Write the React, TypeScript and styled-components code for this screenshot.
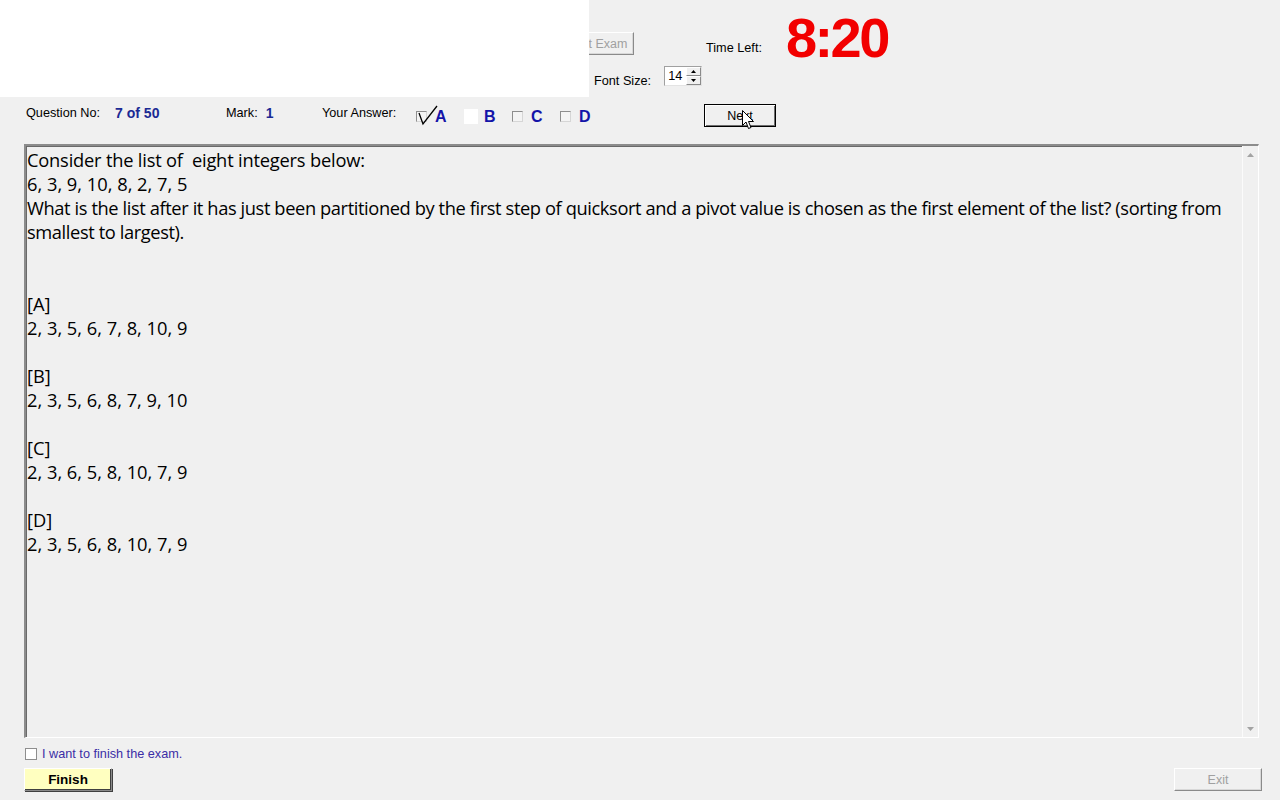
import React from "react";
import styled, { createGlobalStyle } from "styled-components";

const GlobalStyle = createGlobalStyle`
  html, body { margin: 0; padding: 0; background: #f0f0f0; }
  body { font-family: "Liberation Sans", Arial, sans-serif; }
`;

const Page = styled.div`
  position: relative;
  width: 1280px;
  height: 800px;
  background: #f0f0f0;
  display: flex;
  flex-direction: column;
  overflow: hidden;
  font-family: "Liberation Sans", Arial, sans-serif;
`;

const Overlay = styled.div`
  position: absolute;
  left: 0;
  top: 0;
  width: 589px;
  height: 97px;
  background: #ffffff;
  z-index: 5;
`;

const Header = styled.div`
  height: 97px;
  display: flex;
  padding-left: 559px;
  flex-shrink: 0;
`;

const LeftCol = styled.div`
  width: 147px;
  display: flex;
  flex-direction: column;
`;

const WinButton = styled.button<{ $w: number; $disabled?: boolean; $yellow?: boolean; $bold?: boolean; $default?: boolean }>`
  width: ${(p) => p.$w}px;
  height: 23px;
  box-sizing: border-box;
  padding: 0;
  margin: 0;
  font-family: "Liberation Sans", Arial, sans-serif;
  font-size: ${(p) => (p.$bold ? "13.5px" : "12.5px")};
  font-weight: ${(p) => (p.$bold ? 700 : 400)};
  color: ${(p) => (p.$disabled ? "#a0a0a0" : "#000")};
  background: ${(p) => (p.$yellow ? "#ffffc0" : "#f0f0f0")};
  border: 1px solid;
  border-color: ${(p) =>
    p.$default ? "#000" : "#ffffff #8a8a8a #8a8a8a #ffffff"};
  box-shadow: ${(p) =>
    p.$default
      ? "inset 1px 1px 0 #ffffff, inset -1px -1px 0 #6e6e6e"
      : p.$disabled
      ? "inset -1px -1px 0 #d8d8d8"
      : "inset -1px -1px 0 #404040, 1px 1px 0 #404040"};
  cursor: default;
  position: relative;
`;

const StartButton = styled(WinButton)`
  margin-top: 32px;
`;

const FontSizeRow = styled.div`
  margin-top: 11px;
  padding-left: 35px;
  display: flex;
  align-items: flex-start;
  gap: 13px;
  height: 20px;
`;

const Label = styled.span`
  font-size: 12.7px;
  line-height: 14px;
  color: #000;
  white-space: nowrap;
`;

const FontSizeLabel = styled(Label)`
  margin-top: 8px;
`;

const Spinner = styled.div`
  width: 38px;
  height: 20px;
  box-sizing: border-box;
  background: #ffffff;
  border: 1px solid;
  border-color: #a0a0a0 #e3e3e3 #e3e3e3 #a0a0a0;
  display: flex;
  align-items: stretch;
`;

const SpinValue = styled.span`
  flex: 1;
  font-size: 12.7px;
  line-height: 18px;
  padding-left: 3px;
  color: #000;
`;

const SpinButtons = styled.div`
  width: 15px;
  display: flex;
  flex-direction: column;
`;

const SpinBtn = styled.div`
  flex: 1;
  background: #f0f0f0;
  border: 1px solid;
  border-color: #ffffff #8a8a8a #8a8a8a #ffffff;
  display: flex;
  align-items: center;
  justify-content: center;
`;

const TimeCol = styled.div`
  display: flex;
  align-items: flex-start;
`;

const TimeLabel = styled(Label)`
  margin-top: 41px;
  width: 80px;
`;

const Timer = styled.div`
  margin-top: 10px;
  font-size: 56px;
  line-height: 56px;
  font-weight: 700;
  color: #f20000;
  letter-spacing: -2.6px;
`;

const InfoRow = styled.div`
  height: 47px;
  flex-shrink: 0;
  display: flex;
  align-items: flex-start;
  padding-left: 26px;
`;

const Field = styled.div<{ $w: number; $gap: number }>`
  width: ${(p) => p.$w}px;
  margin-top: 9px;
  display: flex;
  align-items: center;
  gap: ${(p) => p.$gap}px;
`;

const Value = styled.span`
  font-size: 14px;
  line-height: 14px;
  font-weight: 700;
  color: #1b2a94;
`;

const Answers = styled.div`
  display: flex;
  margin-top: 12px;
  margin-left: 18px;
`;

const Option = styled.div`
  width: 48px;
  display: flex;
  align-items: center;
  gap: 8px;
  position: relative;
`;

const Box = styled.span<{ $hidden?: boolean }>`
  width: ${(p) => (p.$hidden ? 14 : 11)}px;
  height: ${(p) => (p.$hidden ? 15 : 11)}px;
  box-sizing: border-box;
  background: ${(p) => (p.$hidden ? "#ffffff" : "#f4f4f4")};
  border: ${(p) => (p.$hidden ? "none" : "1px solid")};
  border-color: #8e8e8e #d6d6d6 #d6d6d6 #8e8e8e;
  margin-right: ${(p) => (p.$hidden ? "-2px" : "0")};
  margin-top: -2px;
  flex-shrink: 0;
`;

const Letter = styled.span`
  font-size: 16px;
  line-height: 16px;
  font-weight: 700;
  color: #1414a8;
`;

const CheckMark = styled.svg`
  position: absolute;
  left: 0;
  top: -5px;
`;

const NextWrap = styled.div`
  margin-left: 96px;
  margin-top: 7px;
  position: relative;
`;

const Cursor = styled.svg`
  position: absolute;
  left: 38px;
  top: 6px;
  z-index: 3;
`;

const ContentPanel = styled.div`
  margin-left: 24px;
  width: 1235px;
  height: 594px;
  box-sizing: border-box;
  flex-shrink: 0;
  display: flex;
  border-top: 2px solid #8c8c8c;
  border-left: 2px solid #8c8c8c;
  border-bottom: 1px solid #ffffff;
  border-right: 1px solid #ffffff;
  box-shadow: inset 1px 1px 0 #6a6a6a;
`;

const TextArea = styled.div`
  flex: 1;
  padding: 2px 0 0 1px;
  font-family: "Open Sans", "Noto Sans", sans-serif;
  font-size: 18.3px;
  line-height: 24px;
  color: #000;
  white-space: pre-wrap;
`;

const Line = styled.div<{ $tight?: number }>`
  min-height: 24px;
  letter-spacing: ${(p) => p.$tight ?? 0}px;
`;

const Scrollbar = styled.div`
  width: 15px;
  border-left: 1px solid #fbfbfb;
  background: #f0f0f0;
  display: flex;
  flex-direction: column;
  justify-content: space-between;
  align-items: center;
  padding: 7px 0 6px;
`;

const Footer = styled.div`
  display: flex;
  flex-direction: column;
  padding-left: 24px;
  padding-right: 18px;
`;

const FinishCheck = styled.label`
  margin-top: 10px;
  display: flex;
  align-items: center;
  gap: 5px;
  padding-left: 1px;
  height: 12px;
`;

const CheckBox12 = styled.span`
  width: 12px;
  height: 12px;
  box-sizing: border-box;
  background: #ffffff;
  border: 1px solid #8e8e8e;
`;

const FinishLabel = styled(Label)`
  color: #3b2ea6;
`;

const ButtonRow = styled.div`
  margin-top: 8px;
  display: flex;
  justify-content: space-between;
`;

const lines: { text: string; tight?: number }[] = [
  { text: "Consider the list of  eight integers below:", tight: -0.2 },
  { text: "6, 3, 9, 10, 8, 2, 7, 5" },
  {
    text:
      "What is the list after it has just been partitioned by the first step of quicksort and a pivot value is chosen as the first element of the list? (sorting from smallest to largest).",
    tight: -0.4,
  },
  { text: "" },
  { text: "" },
  { text: "[A]" },
  { text: "2, 3, 5, 6, 7, 8, 10, 9" },
  { text: "" },
  { text: "[B]" },
  { text: "2, 3, 5, 6, 8, 7, 9, 10" },
  { text: "" },
  { text: "[C]" },
  { text: "2, 3, 6, 5, 8, 10, 7, 9" },
  { text: "" },
  { text: "[D]" },
  { text: "2, 3, 5, 6, 8, 10, 7, 9" },
];

const Tri = ({ up }: { up?: boolean }) => (
  <svg width="7" height="4" viewBox="0 0 7 4">
    <polygon points={up ? "0,4 7,4 3.5,0" : "0,0 7,0 3.5,4"} fill="#a3a3a3" />
  </svg>
);

const SpinTri = ({ up }: { up?: boolean }) => (
  <svg width="5" height="3" viewBox="0 0 5 3">
    <polygon points={up ? "0,3 5,3 2.5,0" : "0,0 5,0 2.5,3"} fill="#000" />
  </svg>
);

export default function App() {
  return (
    <>
      <GlobalStyle />
      <Page>
        <Overlay />
        <Header>
          <LeftCol>
            <StartButton $w={75} $disabled>
              Start Exam
            </StartButton>
            <FontSizeRow>
              <FontSizeLabel>Font Size:</FontSizeLabel>
              <Spinner>
                <SpinValue>14</SpinValue>
                <SpinButtons>
                  <SpinBtn>
                    <SpinTri up />
                  </SpinBtn>
                  <SpinBtn>
                    <SpinTri />
                  </SpinBtn>
                </SpinButtons>
              </Spinner>
            </FontSizeRow>
          </LeftCol>
          <TimeCol>
            <TimeLabel>Time Left:</TimeLabel>
            <Timer>8:20</Timer>
          </TimeCol>
        </Header>
        <InfoRow>
          <Field $w={200} $gap={15}>
            <Label>Question No:</Label>
            <Value>7 of 50</Value>
          </Field>
          <Field $w={96} $gap={8}>
            <Label>Mark:</Label>
            <Value>1</Value>
          </Field>
          <Field $w={76} $gap={0}>
            <Label>Your Answer:</Label>
          </Field>
          <Answers>
            <Option>
              <Box />
              <Letter>A</Letter>
              <CheckMark width="26" height="24" viewBox="0 0 26 24">
                <polyline
                  points="3,9 7,20 21,2"
                  fill="none"
                  stroke="#000"
                  strokeWidth="1.3"
                />
              </CheckMark>
            </Option>
            <Option>
              <Box $hidden />
              <Letter>B</Letter>
            </Option>
            <Option>
              <Box />
              <Letter>C</Letter>
            </Option>
            <Option>
              <Box />
              <Letter>D</Letter>
            </Option>
          </Answers>
          <NextWrap>
            <WinButton $w={72} $default>
              Next
            </WinButton>
            <Cursor width="13" height="20" viewBox="0 0 13 20">
              <polygon
                points="0.5,0.5 0.5,15.5 4,12 6.5,18.5 9,17.5 6.5,11.5 11.5,11.5"
                fill="#ffffff"
                stroke="#000"
                strokeWidth="1"
              />
            </Cursor>
          </NextWrap>
        </InfoRow>
        <ContentPanel>
          <TextArea>
            {lines.map((l, i) => (
              <Line key={i} $tight={l.tight}>
                {l.text}
              </Line>
            ))}
          </TextArea>
          <Scrollbar>
            <Tri up />
            <Tri />
          </Scrollbar>
        </ContentPanel>
        <Footer>
          <FinishCheck>
            <CheckBox12 />
            <FinishLabel>I want to finish the exam.</FinishLabel>
          </FinishCheck>
          <ButtonRow>
            <WinButton $w={88} $yellow $bold>
              Finish
            </WinButton>
            <WinButton $w={88} $disabled>
              Exit
            </WinButton>
          </ButtonRow>
        </Footer>
      </Page>
    </>
  );
}
